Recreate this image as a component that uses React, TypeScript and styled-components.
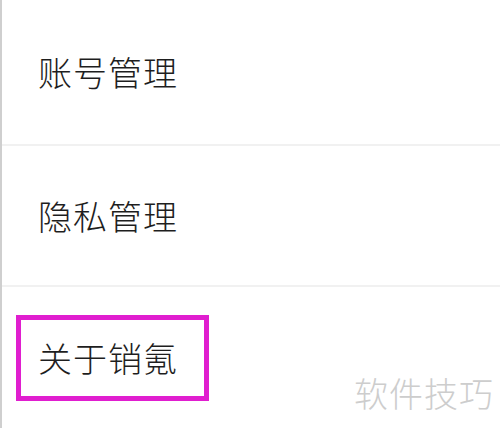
import styled, { createGlobalStyle } from 'styled-components';

const Global = createGlobalStyle`
  html, body {
    margin: 0;
    padding: 0;
    background: #fff;
  }
  body {
    font-family: "Noto Sans CJK SC", "Noto Sans", sans-serif;
  }
`;

const Page = styled.div`
  position: relative;
  width: 500px;
  height: 428px;
  overflow: hidden;
  background: #fff;
  border-left: 2px solid #cfcfcf;
  box-sizing: border-box;
`;

const List = styled.ul`
  list-style: none;
  margin: 0;
  padding: 0;
`;

const Row = styled.li<{ $h: number }>`
  position: relative;
  display: flex;
  align-items: center;
  height: ${p => p.$h}px;
  padding-left: 36px;
  border-bottom: 2px solid #f1f1f1;
  box-sizing: border-box;

  &:last-child {
    border-bottom: none;
  }
`;

const Label = styled.span`
  font-size: 34px;
  font-weight: 300;
  color: #1e1e1e;
  letter-spacing: 1px;
  line-height: 1;
`;

const Highlight = styled.div`
  position: absolute;
  left: 14px;
  top: 28px;
  width: 193px;
  height: 86px;
  border: 5px solid #e01ecf;
  box-sizing: border-box;
  pointer-events: none;
`;

const Watermark = styled.div`
  position: absolute;
  right: 6px;
  bottom: 18px;
  font-size: 34px;
  font-weight: 300;
  color: #cdcdcd;
  letter-spacing: 1px;
  line-height: 1;
`;

const items = [
  { text: '账号管理', h: 146 },
  { text: '隐私管理', h: 141 },
  { text: '关于销氪', h: 141, marked: true },
];

export default function App() {
  return (
    <Page>
      <Global />
      <List>
        {items.map(item => (
          <Row key={item.text} $h={item.h}>
            <Label>{item.text}</Label>
            {item.marked && <Highlight />}
          </Row>
        ))}
      </List>
      <Watermark>软件技巧</Watermark>
    </Page>
  );
}
